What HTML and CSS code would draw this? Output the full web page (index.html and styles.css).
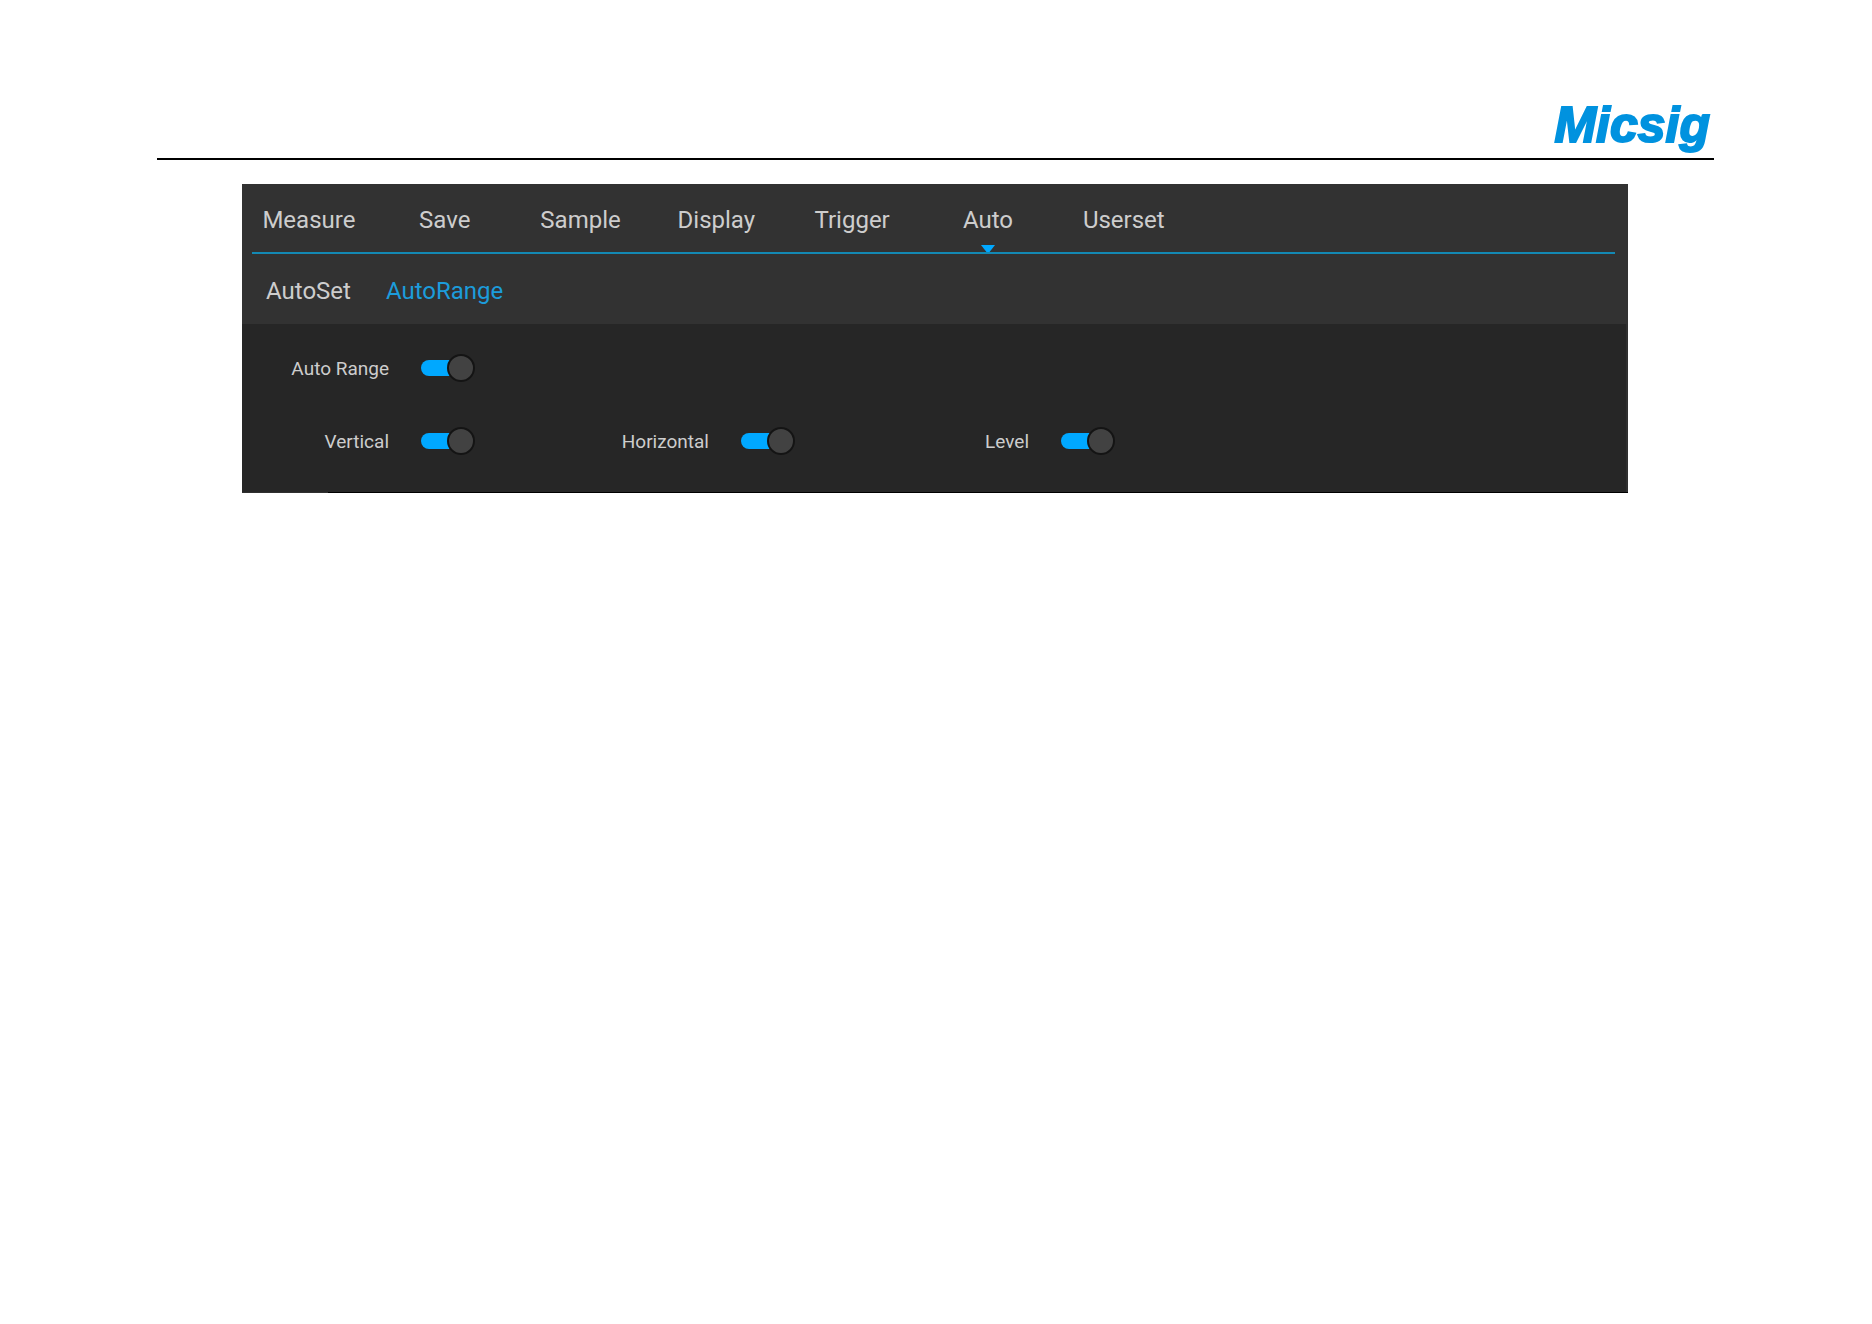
FILE: index.html
```html
<!DOCTYPE html>
<html lang="en">
<head>
    <meta charset="UTF-8">
    <meta name="viewport" content="width=device-width, initial-scale=1.0">
    <title>Micsig - Auto Range</title>
    <link rel="stylesheet" href="styles.css">
</head>
<body>
    <header class="page-header">
        <span class="logo">Micsig</span>
    </header>

    <main class="panel">
        <div class="panel-top">
            <nav class="tabs">
                <button class="tab" type="button">Measure</button>
                <button class="tab" type="button">Save</button>
                <button class="tab" type="button">Sample</button>
                <button class="tab" type="button">Display</button>
                <button class="tab" type="button">Trigger</button>
                <button class="tab active" type="button">Auto</button>
                <button class="tab" type="button">Userset</button>
            </nav>
            <nav class="subtabs">
                <button class="subtab" type="button">AutoSet</button>
                <button class="subtab active" type="button">AutoRange</button>
            </nav>
        </div>

        <div class="settings">
            <div class="setting-row">
                <div class="setting">
                    <label for="auto-range">Auto Range</label>
                    <input class="switch" type="checkbox" id="auto-range" checked>
                </div>
            </div>
            <div class="setting-row">
                <div class="setting">
                    <label for="vertical">Vertical</label>
                    <input class="switch" type="checkbox" id="vertical" checked>
                </div>
                <div class="setting">
                    <label for="horizontal">Horizontal</label>
                    <input class="switch" type="checkbox" id="horizontal" checked>
                </div>
                <div class="setting">
                    <label for="level">Level</label>
                    <input class="switch" type="checkbox" id="level" checked>
                </div>
            </div>
        </div>
        <div class="panel-edge"></div>
    </main>
</body>
</html>
```
FILE: styles.css
```css
*,
*::before,
*::after {
    box-sizing: border-box;
}
body {
    margin: 0;
    padding: 96px 158px 0 157px;
    background-color: #fff;
    font-family: Roboto, "Liberation Sans", sans-serif;
}
button {
    border: none;
    padding: 0;
    background: none;
    font: inherit;
    color: inherit;
    cursor: pointer;
}
.page-header {
    display: flex;
    justify-content: flex-end;
    height: 64px;
    padding-right: 4px;
    border-bottom: 2px solid #000;
}
.logo {
    font-family: "Liberation Sans", Arial, sans-serif;
    font-size: 50px;
    line-height: 58px;
    font-weight: bold;
    font-style: italic;
    color: #0092df;
    -webkit-text-stroke: 2px #0092df;
}
.panel {
    margin: 24px 86px 0 85px;
    background-color: #262626;
    color: #cdcdcd;
}
.panel-top {
    background-color: #323232;
    font-size: 24px;
    line-height: 28px;
}
.tabs {
    display: flex;
    height: 70px;
    position: relative;
}
/* blue rule under the tabs */
.tabs::after {
    content: "";
    position: absolute;
    left: 10px;
    right: 13px;
    bottom: 0;
    height: 2px;
    background-color: #1389b4;
}
.tab {
    width: 9.8%;
    padding: 2px 2px 0 0;
    position: relative;
}
.tab.active::after {
    content: "";
    position: absolute;
    left: 50%;
    bottom: 0;
    margin-left: -8px;
    border: 7px solid transparent;
    border-top: 9px solid #00a8ff;
    border-bottom: none;
}
.subtabs {
    display: flex;
    gap: 35px;
    height: 70px;
    padding: 4px 24px 0;
}
.subtab.active {
    color: #1c9cdb;
}
.settings {
    padding: 8px 0 15px;
    border-right: 2px solid #303030;
    font-size: 19px;
    line-height: 24px;
}
.setting-row {
    display: flex;
    height: 72px;
}
.setting-row:first-child {
    margin-bottom: 1px;
}
.setting {
    display: flex;
    align-items: center;
    gap: 32px;
    width: 320px;
}
.setting label {
    width: 147px;
    padding-top: 2px;
    text-align: right;
}
.switch {
    appearance: none;
    position: relative;
    width: 54px;
    height: 28px;
    margin: 0;
    cursor: pointer;
}
.switch::before {
    content: "";
    position: absolute;
    left: 0;
    top: 6px;
    width: 48px;
    height: 16px;
    border-radius: 8px;
    background-color: #555;
}
.switch::after {
    content: "";
    position: absolute;
    left: 0;
    top: 0;
    width: 28px;
    height: 28px;
    border: 2px solid #141414;
    border-radius: 50%;
    background-color: #424242;
}
.switch:checked::before {
    background-color: #00a8ff;
}
.switch:checked::after {
    left: 26px;
}
.panel-edge {
    height: 1px;
    background: linear-gradient(to right, #303030 86px, #000 86px);
}
```
